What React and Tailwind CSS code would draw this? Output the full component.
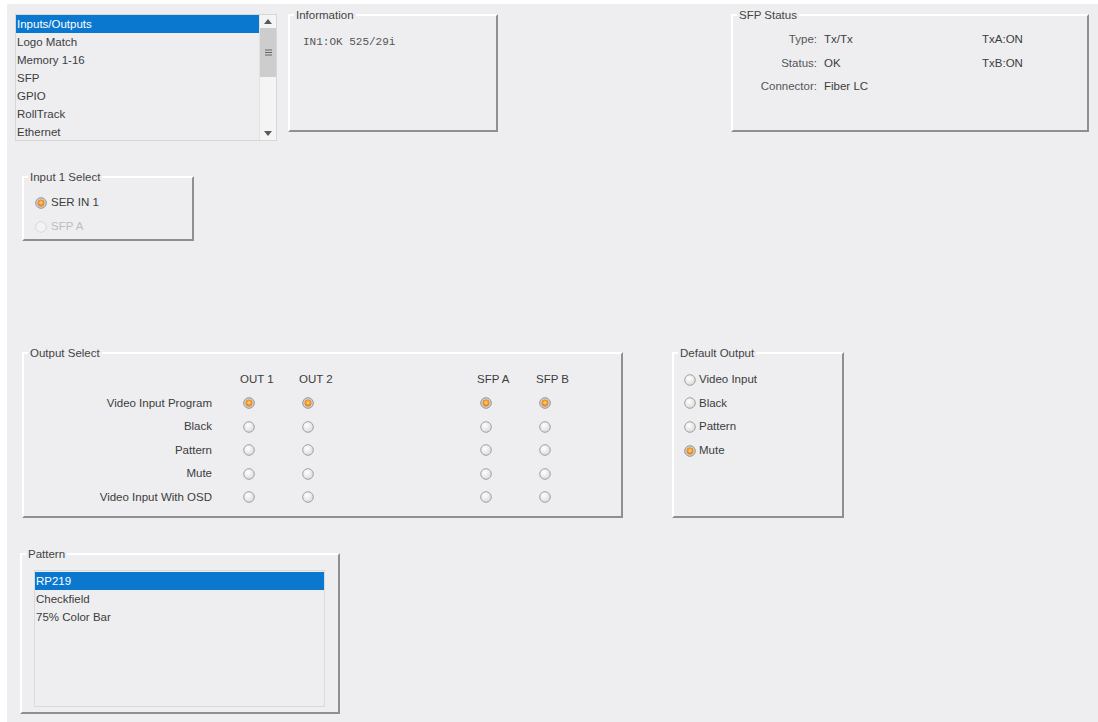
import React from 'react';

const menuItems = ['Inputs/Outputs', 'Logo Match', 'Memory 1-16', 'SFP', 'GPIO', 'RollTrack', 'Ethernet'];
const patterns = ['RP219', 'Checkfield', '75% Color Bar'];

const outputRows = [
  { label: 'Video Input Program', on: true },
  { label: 'Black', on: false },
  { label: 'Pattern', on: false },
  { label: 'Mute', on: false },
  { label: 'Video Input With OSD', on: false },
];

const defaultOutputs = [
  { label: 'Video Input', on: false },
  { label: 'Black', on: false },
  { label: 'Pattern', on: false },
  { label: 'Mute', on: true },
];

// shared gradients for the radio buttons
const RadioDefs = () => (
  <svg width="0" height="0" className="absolute">
    <defs>
      <radialGradient id="radioOff" cx="40%" cy="35%" r="70%">
        <stop offset="0%" stopColor="#ffffff" />
        <stop offset="100%" stopColor="#d9d9d9" />
      </radialGradient>
      <radialGradient id="radioOn" cx="50%" cy="45%" r="60%">
        <stop offset="0%" stopColor="#ffd98a" />
        <stop offset="55%" stopColor="#f39a2c" />
        <stop offset="100%" stopColor="#d96a0a" />
      </radialGradient>
    </defs>
  </svg>
);

const Radio = ({ checked, disabled }) => (
  <svg width="12" height="12" viewBox="0 0 12 12" className="shrink-0">
    {disabled ? (
      <circle cx="6" cy="6" r="5.3" fill="#f3f3f3" stroke="#d8d8d8" strokeWidth="1" />
    ) : checked ? (
      <>
        <circle cx="6" cy="6" r="5.3" fill="#d2d2d2" stroke="#959595" strokeWidth="1" />
        <circle cx="6" cy="6" r="3.4" fill="url(#radioOn)" />
      </>
    ) : (
      <circle cx="6" cy="6" r="5.3" fill="url(#radioOff)" stroke="#a2a2a2" strokeWidth="1" />
    )}
  </svg>
);

const Group = ({ title, className, children }) => (
  <div className={'relative shrink-0 border-2 border-t-white border-l-white border-r-[#8f8f8f] border-b-[#8f8f8f] ' + className}>
    <span className="absolute -top-[9px] left-[4px] bg-[#eeeef0] px-[2px] leading-[16px] text-[#444]">{title}</span>
    {children}
  </div>
);

const ScrollBar = () => (
  <div className="flex w-[17px] flex-col border-l border-[#e2e2e2] bg-[#f4f4f4]">
    <div className="flex h-[13px] items-center justify-center">
      <svg width="8" height="5" viewBox="0 0 8 5"><path d="M0 5 L4 0 L8 5 Z" fill="#5a5a5a" /></svg>
    </div>
    <div className="flex h-[49px] items-center justify-center bg-[#cdcdcd]">
      <svg width="7" height="7" viewBox="0 0 7 7">
        <path d="M0 1 H7 M0 3.5 H7 M0 6 H7" stroke="#666" strokeWidth="1" />
      </svg>
    </div>
    <div className="flex-1" />
    <div className="flex h-[13px] items-center justify-center">
      <svg width="8" height="5" viewBox="0 0 8 5"><path d="M0 0 L4 5 L8 0 Z" fill="#5a5a5a" /></svg>
    </div>
  </div>
);

export default function App() {
  return (
    <div className="min-h-[722px] bg-white pl-[7px] pt-[4px] font-['Liberation_Sans',Arial,sans-serif] text-[11.5px] text-[#3c3c3c]">
      <RadioDefs />
      <div className="h-[718px] bg-[#eeeef0] pt-[10px]">
        {/* top row: menu, information, SFP status */}
        <div className="flex items-start">
          <div className="ml-[8px] flex h-[127px] w-[262px] border border-[#d6d6d6]">
            <div className="flex-1">
              {menuItems.map((item, i) => (
                <div
                  key={item}
                  className={
                    i === 0
                      ? 'h-[18px] bg-[#0a78cf] pl-[1px] leading-[18px] text-white'
                      : 'h-[18px] pl-[1px] leading-[18px]'
                  }
                >
                  {item}
                </div>
              ))}
            </div>
            <ScrollBar />
          </div>

          <Group title="Information" className="ml-[11px] h-[118px] w-[210px]">
            <div className="pl-[13px] pt-[19px] font-['Liberation_Mono','Courier_New',monospace] text-[11px] leading-[14px] text-[#555]">
              IN1:OK 525/29i
            </div>
          </Group>

          <Group title="SFP Status" className="ml-[233px] h-[118px] w-[358px]">
            <div className="pt-[12px]">
              {[
                ['Type:', 'Tx/Tx', 'TxA:ON'],
                ['Status:', 'OK', 'TxB:ON'],
                ['Connector:', 'Fiber LC', ''],
              ].map(([label, value, extra]) => (
                <div key={label} className="flex h-[23.6px] items-center">
                  <span className="w-[84px] text-right text-[#555]">{label}</span>
                  <span className="ml-[7px] w-[158px]">{value}</span>
                  <span>{extra}</span>
                </div>
              ))}
            </div>
          </Group>
        </div>

        {/* input selection */}
        <Group title="Input 1 Select" className="ml-[15px] mt-[35px] h-[65px] w-[172px]">
          <div className="pl-[11px] pt-[13px]">
            <div className="flex h-[24px] items-center gap-[4px]">
              <Radio checked />
              <span>SER IN 1</span>
            </div>
            <div className="flex h-[24px] items-center gap-[4px] text-[#bdbdbd]">
              <Radio disabled />
              <span>SFP A</span>
            </div>
          </div>
        </Group>

        {/* output routing */}
        <div className="mt-[111px] flex items-start">
          <Group title="Output Select" className="ml-[15px] h-[166px] w-[601px]">
            <div className="grid grid-cols-[216px_59px_178px_59px_1fr] pt-[14px]">
              <div className="h-[23.5px]" />
              {['OUT 1', 'OUT 2', 'SFP A', 'SFP B'].map((h) => (
                <div key={h} className="flex h-[23.5px] items-center">{h}</div>
              ))}
              {outputRows.map((row) => (
                <React.Fragment key={row.label}>
                  <div className="flex h-[23.5px] items-center justify-end pr-[28px]">{row.label}</div>
                  {[0, 1, 2, 3].map((c) => (
                    <div key={c} className="flex h-[23.5px] items-center pl-[3px]">
                      <Radio checked={row.on} />
                    </div>
                  ))}
                </React.Fragment>
              ))}
            </div>
          </Group>

          <Group title="Default Output" className="ml-[49px] h-[166px] w-[172px]">
            <div className="pl-[10px] pt-[14px]">
              {defaultOutputs.map((o) => (
                <div key={o.label} className="flex h-[23.6px] items-center gap-[3px]">
                  <Radio checked={o.on} />
                  <span>{o.label}</span>
                </div>
              ))}
            </div>
          </Group>
        </div>

        {/* test pattern list */}
        <Group title="Pattern" className="ml-[13px] mt-[35px] h-[161px] w-[320px]">
          <div className="ml-[12px] mt-[15px] h-[137px] w-[291px] border border-[#dadada] pt-[1px]">
            {patterns.map((p, i) => (
              <div
                key={p}
                className={
                  i === 0
                    ? 'h-[18px] bg-[#0a78cf] pl-[1px] leading-[18px] text-white'
                    : 'h-[18px] pl-[1px] leading-[18px]'
                }
              >
                {p}
              </div>
            ))}
          </div>
        </Group>
      </div>
    </div>
  );
}
